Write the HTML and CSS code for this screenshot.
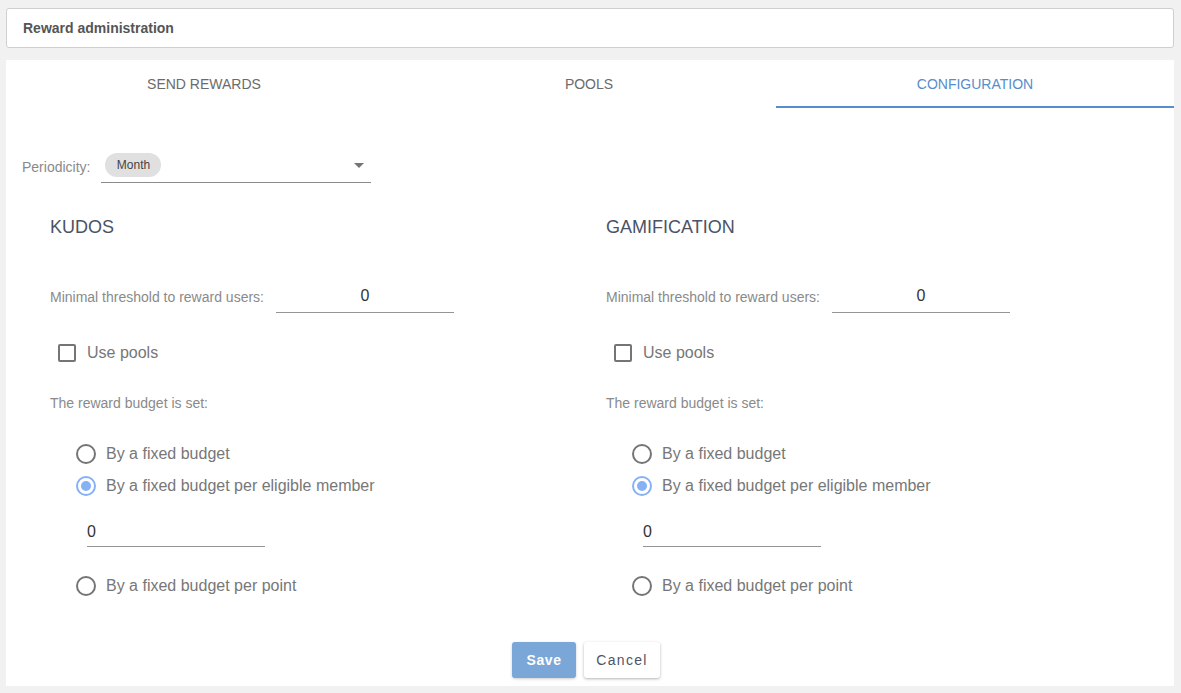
FILE: index.html
```html
<!DOCTYPE html>
<html>
<head>
<meta charset="utf-8">
<link rel="stylesheet" href="styles.css">
</head>
<body>
<div class="page">
  <header class="topbar">Reward administration</header>
  <main class="card">
    <nav class="tabs">
      <div class="tab">SEND REWARDS</div>
      <div class="tab">POOLS</div>
      <div class="tab active">CONFIGURATION</div>
    </nav>
    <div class="period">
      <span class="label">Periodicity:</span>
      <div class="select">
        <span class="chip">Month</span>
        <span class="caret"></span>
      </div>
    </div>
    <div class="columns">
      <section class="col">
        <h2 class="heading">KUDOS</h2>
        <div class="threshold">
          <span class="label">Minimal threshold to reward users:</span>
          <div class="numfield center">0</div>
        </div>
        <div class="check"><span class="box"></span><span>Use pools</span></div>
        <div class="label budget">The reward budget is set:</div>
        <div class="radios">
          <div class="radio"><span class="circle"></span><span>By a fixed budget</span></div>
          <div class="radio on"><span class="circle"></span><span>By a fixed budget per eligible member</span></div>
          <div class="numfield amount">0</div>
          <div class="radio last"><span class="circle"></span><span>By a fixed budget per point</span></div>
        </div>
      </section>
      <section class="col">
        <h2 class="heading">GAMIFICATION</h2>
        <div class="threshold">
          <span class="label">Minimal threshold to reward users:</span>
          <div class="numfield center">0</div>
        </div>
        <div class="check"><span class="box"></span><span>Use pools</span></div>
        <div class="label budget">The reward budget is set:</div>
        <div class="radios">
          <div class="radio"><span class="circle"></span><span>By a fixed budget</span></div>
          <div class="radio on"><span class="circle"></span><span>By a fixed budget per eligible member</span></div>
          <div class="numfield amount">0</div>
          <div class="radio last"><span class="circle"></span><span>By a fixed budget per point</span></div>
        </div>
      </section>
    </div>
    <div class="actions">
      <button class="btn save">Save</button>
      <button class="btn cancel">Cancel</button>
    </div>
  </main>
</div>
</body>
</html>
```

FILE: styles.css
```css
* { box-sizing: border-box; }
html, body { margin: 0; padding: 0; }
body {
  background: #f1f1f1;
  font-family: "Liberation Sans", Arial, sans-serif;
  color: #333;
  width: 1181px;
  height: 693px;
  overflow: hidden;
}
.page { padding: 8px 7px 0 6px; }
.topbar {
  height: 40px;
  background: #fff;
  border: 1px solid #cfcfcf;
  border-radius: 3px;
  padding-left: 16px;
  display: flex;
  align-items: center;
  font-size: 14px;
  font-weight: bold;
  color: #555;
}
.card {
  margin-top: 12px;
  background: #fff;
  height: 626px;
  display: flex;
  flex-direction: column;
}
.tabs {
  display: grid;
  grid-template-columns: 396fr 374fr 398fr;
  height: 48px;
}
.tab {
  display: flex;
  align-items: center;
  justify-content: center;
  font-size: 14px;
  color: #6b6b6b;
  border-bottom: 2px solid transparent;
  padding-top: 2px;
}
.tab.active { color: #578dc9; border-bottom-color: #578dc9; }
.label { font-size: 14px; color: #8a8a8a; }
.period {
  margin: 42px 0 0 16px;
  display: flex;
  align-items: center;
}
.select {
  margin-left: 11px;
  width: 270px;
  height: 33px;
  border-bottom: 1px solid #8c8c8c;
  display: flex;
  align-items: center;
  justify-content: space-between;
  padding: 0 7px 2px 4px;
}
.chip {
  background: #e0e0e0;
  border-radius: 12px;
  height: 24px;
  width: 56px;
  font-size: 12px;
  color: #444;
  display: flex;
  align-items: center;
  justify-content: center;
}
.caret {
  width: 0; height: 0;
  border-left: 5px solid transparent;
  border-right: 5px solid transparent;
  border-top: 5px solid #757575;
}
.columns {
  display: grid;
  grid-template-columns: 556px 556px;
  padding-left: 44px;
}
.heading {
  margin: 34px 0 0;
  font-size: 18px;
  line-height: 20px;
  font-weight: normal;
  color: #4b5265;
}
.threshold {
  margin-top: 44px;
  display: flex;
  align-items: center;
}
.numfield {
  height: 32px;
  width: 178px;
  border-bottom: 1px solid #949494;
  font-size: 16px;
  color: #333;
  display: flex;
  align-items: center;
  padding-bottom: 2px;
}
.numfield.center { justify-content: center; margin-left: 12px; }
.check {
  margin: 28px 0 0 8px;
  height: 24px;
  display: flex;
  align-items: center;
  font-size: 16px;
  color: #777;
}
.box {
  width: 18px; height: 18px;
  border: 2px solid #757575;
  border-radius: 2px;
  margin-right: 11px;
}
.budget { margin-top: 30px; line-height: 16px; }
.radios { margin: 27px 0 0 26px; }
.radio {
  height: 32px;
  display: flex;
  align-items: center;
  font-size: 16px;
  color: #777;
}
.circle {
  width: 20px; height: 20px;
  border: 2px solid #757575;
  border-radius: 50%;
  margin-right: 10px;
  display: flex;
  align-items: center;
  justify-content: center;
}
.radio.on .circle { border-color: #86b1f5; }
.radio.on .circle::after {
  content: "";
  width: 10px; height: 10px;
  border-radius: 50%;
  background: #86b1f5;
}
.numfield.amount { margin: 15px 0 0 11px; height: 30px; padding-bottom: 0; }
.radio.last { margin-top: 23px; }
.actions {
  margin-top: 40px;
  display: flex;
  justify-content: center;
  gap: 8px;
  padding-right: 8px;
}
.btn {
  height: 36px;
  border: none;
  border-radius: 3px;
  font-family: "Liberation Sans", Arial, sans-serif;
  font-size: 14px;
  letter-spacing: 0.6px;
}
.save {
  width: 64px;
  background: #7ba6d8;
  color: #fff;
  font-weight: bold;
  box-shadow: 0 1px 3px rgba(0,0,0,0.2);
}
.cancel {
  width: 76px;
  background: #fff;
  color: #4d5466;
  letter-spacing: 1.3px;
  box-shadow: 0 1px 3px rgba(0,0,0,0.3);
}
```
